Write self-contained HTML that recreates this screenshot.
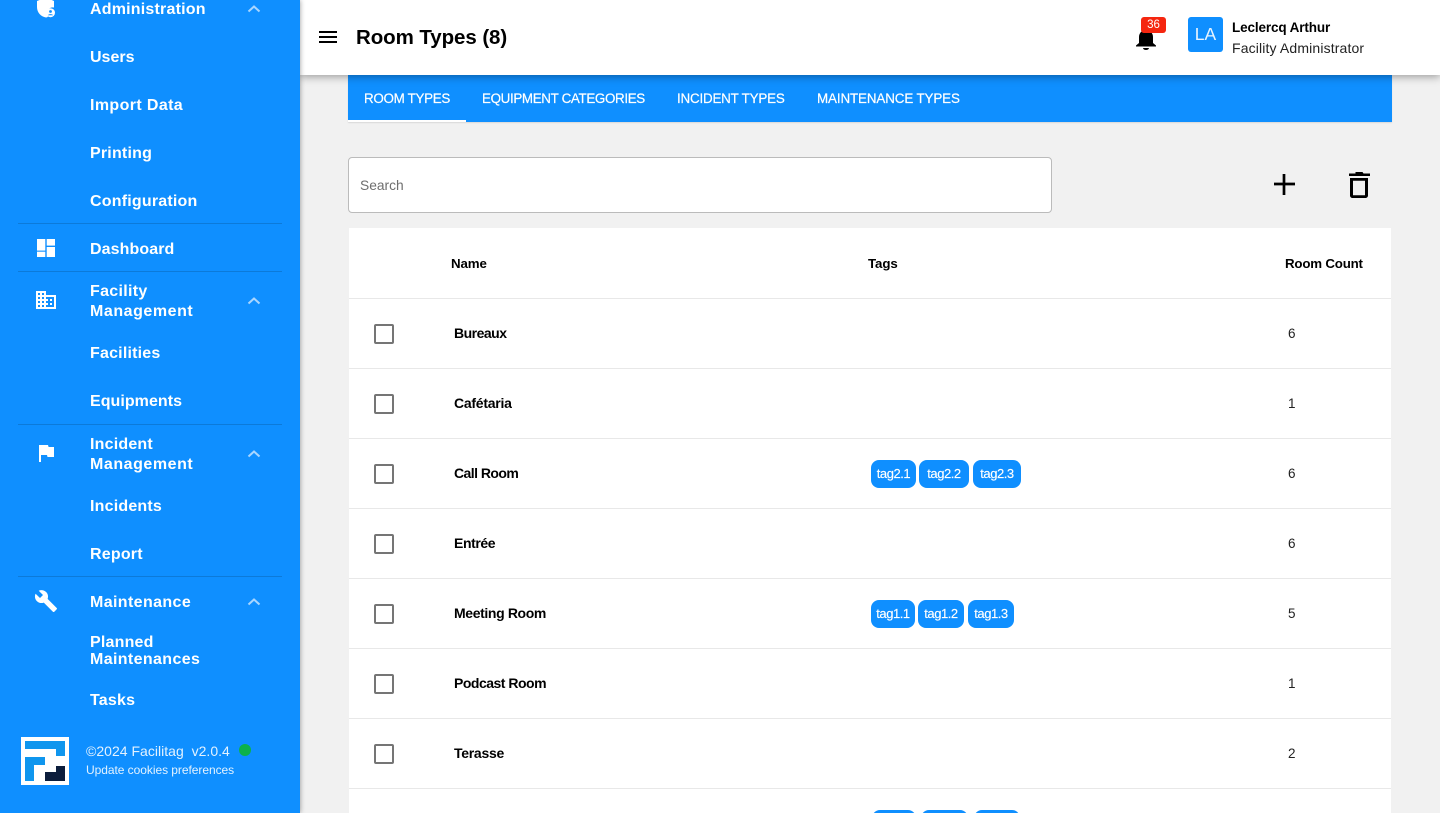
<!DOCTYPE html>
<html lang="en"><head><meta charset="utf-8"><title>Room Types</title>
<style>
*{box-sizing:border-box}
html,body{margin:0;padding:0;width:1440px;height:813px;overflow:hidden;background:#f1f1f1;font-family:"Liberation Sans",sans-serif;color:#000}
#root{position:relative;width:1440px;height:813px;overflow:hidden;background:#f1f1f1}
.a{position:absolute;white-space:nowrap}
#side{position:absolute;left:0;top:0;width:300px;height:813px;background:#0f8fff;box-shadow:0 0 5px rgba(0,0,0,.4);z-index:3}
#side .t{position:absolute;left:90px;margin-top:2px;color:#fff;font-weight:bold;font-size:16px;line-height:20px;white-space:nowrap;letter-spacing:.2px}
.d{position:absolute;left:18px;width:264px;height:1px;background:#0c7ad9}
#head{position:absolute;left:300px;top:0;width:1140px;height:75px;background:#fff;box-shadow:0 2px 8px rgba(0,0,0,.35);z-index:2}
#tabs{position:absolute;left:348px;top:75px;width:1044px;height:47px;background:#0f8fff;box-shadow:0 1px 1px rgba(0,0,0,.1)}
.tab{position:absolute;top:91px;color:#fff;font-size:13.4px;line-height:16px;font-weight:normal;white-space:nowrap;z-index:1;-webkit-text-stroke:.2px #fff}
#tbl{position:absolute;left:349px;top:228px;width:1042px;height:590px;background:#fff}
.ln{position:absolute;left:349px;width:1042px;height:1px;background:#e8e8e8}
.cb{position:absolute;left:374px;width:20px;height:20px;border:2px solid #757575;border-radius:2px;background:#fff}
.nm{position:absolute;left:454px;font-size:14px;line-height:16px;font-weight:bold;white-space:nowrap;letter-spacing:-.4px}
.ct{position:absolute;left:1288px;font-size:13.5px;line-height:16px;color:#222;white-space:nowrap}
.th{position:absolute;top:256px;font-size:13.3px;line-height:16px;font-weight:bold;white-space:nowrap;letter-spacing:-.1px}
.tg{position:absolute;height:28px;background:#0f8fff;color:#fff;border-radius:8px;font-size:13px;line-height:28px;text-align:center;letter-spacing:-.45px;-webkit-text-stroke:.15px #fff}
</style></head><body><div id="root">
<div id="side">
<svg class="a" style="left:36px;top:-4px" width="22" height="24" viewBox="0 0 22 24"><path d="M10 1.500 L1 5 V11 C1 16.500 4.800 20.500 10 21.500 C10.800 21.300 11.500 21 12 20.700 A6 6 0 0 1 18 11.500 V5 Z" fill="#fff"/><circle cx="14.500" cy="16.700" r="4.500" fill="#fff"/><circle cx="14.500" cy="15.500" r="1.400" fill="#0f8fff"/><path d="M12 19.200 C12.500 17.700 16.500 17.700 17 19.200Z" fill="#0f8fff"/></svg>
<span class="t" style="top:-2px;letter-spacing:.2px">Administration</span>
<svg class="a" style="left:247px;top:3.500px" width="14" height="10" viewBox="0 0 14 10"><path d="M1.500 7.500 L7 2.500 L12.500 7.500" fill="none" stroke="#a9d6ff" stroke-width="2"/></svg>
<span class="t" style="top:46px;letter-spacing:0">Users</span>
<span class="t" style="top:94px;letter-spacing:.38px">Import Data</span>
<span class="t" style="top:142px;">Printing</span>
<span class="t" style="top:190px">Configuration</span>
<div class="d" style="top:223px"></div>
<svg class="a" style="left:37px;top:239px" width="18" height="18" viewBox="0 0 18 18" fill="#fff"><rect width="8.300" height="11.600" x="0" y="0"/><rect width="8.300" height="6.600" x="9.700" y="0"/><rect width="8.300" height="10" x="9.700" y="8"/><rect width="8.300" height="5.300" x="0" y="12.700"/></svg>
<span class="t" style="top:238px;letter-spacing:.09px">Dashboard</span>
<div class="d" style="top:271px"></div>
<svg class="a" style="left:36px;top:291px" width="20" height="18" viewBox="0 0 20 18"><path fill="#fff" fill-rule="evenodd" d="M0 0H10V4H20V18H0Z M2 2V4H4V2Z M6 2V4H8V2Z M2 6V8H4V6Z M6 6V8H8V6Z M2 10V12H4V10Z M6 10V12H8V10Z M2 14V16H4V14Z M6 14V16H8V14Z M10 6V8H12V10H10V12H12V14H10V16H18V6Z M14 8H16V10H14Z M14 12H16V14H14Z"/></svg>
<span class="t" style="top:280px;letter-spacing:.3px">Facility</span>
<span class="t" style="top:300px;letter-spacing:.55px">Management</span>
<svg class="a" style="left:247px;top:295.500px" width="14" height="10" viewBox="0 0 14 10"><path d="M1.500 7.500 L7 2.500 L12.500 7.500" fill="none" stroke="#a9d6ff" stroke-width="2"/></svg>
<span class="t" style="top:342px">Facilities</span>
<span class="t" style="top:390px;letter-spacing:.05px">Equipments</span>
<div class="d" style="top:424px"></div>
<svg class="a" style="left:39px;top:445px" width="16" height="18" viewBox="0 0 16 18"><path fill="#fff" d="M0 0H9L9.600 2H15V12H8.500L8 10H2V17H0Z"/></svg>
<span class="t" style="top:433px">Incident</span>
<span class="t" style="top:453px;letter-spacing:.55px">Management</span>
<svg class="a" style="left:247px;top:448.500px" width="14" height="10" viewBox="0 0 14 10"><path d="M1.500 7.500 L7 2.500 L12.500 7.500" fill="none" stroke="#a9d6ff" stroke-width="2"/></svg>
<span class="t" style="top:495px">Incidents</span>
<span class="t" style="top:543px">Report</span>
<div class="d" style="top:576px"></div>
<svg class="a" style="left:34px;top:589px" width="24" height="24" viewBox="0 0 24 24"><path fill="#fff" d="M22.700 19l-9.100-9.100c.9-2.300.4-5-1.500-6.900-2-2-5-2.400-7.400-1.300L9 6 6 9 1.600 4.700C.4 7.100.9 10.100 2.900 12.100c1.900 1.900 4.600 2.400 6.900 1.500l9.100 9.100c.4.400 1 .4 1.400 0l2.300-2.300c.5-.4.500-1.100.1-1.400z"/></svg>
<span class="t" style="top:591px;letter-spacing:.38px">Maintenance</span>
<svg class="a" style="left:247px;top:596.500px" width="14" height="10" viewBox="0 0 14 10"><path d="M1.500 7.500 L7 2.500 L12.500 7.500" fill="none" stroke="#a9d6ff" stroke-width="2"/></svg>
<span class="t" style="top:631px;letter-spacing:.2px">Planned</span>
<span class="t" style="top:648px;letter-spacing:.37px">Maintenances</span>
<span class="t" style="top:689px">Tasks</span>
<svg class="a" style="left:21px;top:737px" width="48" height="48" viewBox="0 0 48 48"><rect width="48" height="48" fill="#fff"/><path fill="#0f96ee" d="M4 4H44V19H35V12H4Z"/><path fill="#0f96ee" d="M4 20H24V28H13V44H4Z"/><path fill="#0c1d3c" d="M24 35H35V29H44V44H24Z"/></svg>
<span class="a" style="left:86px;top:743px;color:#e3f2ff;font-size:14px;line-height:16px;letter-spacing:.02px">©2024 Facilitag&nbsp; v2.0.4</span>
<span class="a" style="left:239px;top:744px;width:12px;height:12px;border-radius:50%;background:#0cb14b"></span>
<span class="a" style="left:86px;top:762px;color:#e3f2ff;font-size:12px;line-height:16px;letter-spacing:-.05px">Update cookies preferences</span>
</div>

<div id="head"></div>
<div class="a" style="left:300px;top:0;width:1140px;height:75px;z-index:4">
<svg class="a" style="left:16px;top:25px" width="24" height="24" viewBox="0 0 24 24"><path d="M3 18h18v-2H3v2zm0-5h18v-2H3v2zm0-7v2h18V6H3z" fill="#000"/></svg>
<span class="a" style="left:56px;top:25px;font-size:20.500px;line-height:26px;font-weight:bold;letter-spacing:-.08px">Room Types (8)</span>
<svg class="a" style="left:834px;top:26px" width="24" height="26" viewBox="0 0 24 26"><path fill="#000" d="M12 24c1.600 0 2.800-.8 3-2H9c.2 1.200 1.400 2 3 2zM7.500 5.500C5.700 7 5 9 5 11v6L2 19.500V20.500H22V19.500L19 17V11c0-2-.7-4-2.500-5.500C15 4.300 9 4.300 7.500 5.500z"/></svg>
<span class="a" style="left:841px;top:17px;width:25px;height:16px;background:#f5260f;border-radius:3px;color:#fff;font-size:11.500px;line-height:16px;text-align:center">36</span>
<span class="a" style="left:888px;top:17px;width:35px;height:35px;background:#0f8fff;border-radius:3px;color:#e8f4ff;font-size:17.500px;line-height:35px;text-align:center">LA</span>
<span class="a" style="left:932px;top:20px;font-size:13.500px;line-height:16px;font-weight:bold;letter-spacing:-.13px">Leclercq Arthur</span>
<span class="a" style="left:932px;top:40px;font-size:14px;line-height:16px;color:#222;letter-spacing:.14px">Facility Administrator</span>
</div>

<div id="tabs"></div>
<div class="a" style="left:348px;top:120px;width:118px;height:2px;background:#fff;z-index:1"></div>
<span class="tab" style="left:364px;letter-spacing:-.3px">ROOM TYPES</span>
<span class="tab" style="left:482px;letter-spacing:-.35px">EQUIPMENT CATEGORIES</span>
<span class="tab" style="left:677px;letter-spacing:-.2px">INCIDENT TYPES</span>
<span class="tab" style="left:817px;letter-spacing:-.12px">MAINTENANCE TYPES</span>

<div class="a" style="left:348px;top:157px;width:704px;height:56px;background:#fff;border:1px solid #bbb;border-radius:4px"></div>
<span class="a" style="left:360px;top:178px;font-size:13.800px;line-height:16px;color:#6e6e6e">Search</span>
<svg class="a" style="left:1272px;top:172px" width="24" height="24" viewBox="0 0 24 24"><path d="M10.650 2h2.700v8.650H23v2.700h-9.650V23h-2.700v-9.650H2v-2.700h8.650z" fill="#000"/></svg>
<svg class="a" style="left:1347px;top:171px" width="24" height="28" viewBox="0 0 24 28"><path fill="#000" fill-rule="evenodd" d="M8.500 1h7l1 1.500H23V5H2V2.500h6.500Z M3 7h18v17.500c0 1.400-1.100 2.500-2.500 2.500H5.500C4.100 27 3 25.900 3 24.500Z M6 9.800V24.200H18V9.800Z"/></svg>

<div id="tbl"></div>
<span class="th" style="left:451px">Name</span>
<span class="th" style="left:868px">Tags</span>
<span class="th" style="left:1285px;letter-spacing:-.2px">Room Count</span>
<div class="ln" style="top:298px"></div>
<div class="ln" style="top:368px"></div>
<div class="ln" style="top:438px"></div>
<div class="ln" style="top:508px"></div>
<div class="ln" style="top:578px"></div>
<div class="ln" style="top:648px"></div>
<div class="ln" style="top:718px"></div>
<div class="ln" style="top:788px"></div>

<div class="cb" style="top:324px"></div><span class="nm" style="top:325px;letter-spacing:-.5px">Bureaux</span><span class="ct" style="top:326px">6</span>
<div class="cb" style="top:394px"></div><span class="nm" style="top:395px;letter-spacing:-.25px">Cafétaria</span><span class="ct" style="top:396px">1</span>
<div class="cb" style="top:464px"></div><span class="nm" style="top:465px;letter-spacing:-.55px">Call Room</span><span class="ct" style="top:466px">6</span>
<div class="cb" style="top:534px"></div><span class="nm" style="top:535px;letter-spacing:-.4px">Entrée</span><span class="ct" style="top:536px">6</span>
<div class="cb" style="top:604px"></div><span class="nm" style="top:605px;letter-spacing:-.37px">Meeting Room</span><span class="ct" style="top:606px">5</span>
<div class="cb" style="top:674px"></div><span class="nm" style="top:675px;letter-spacing:-.5px">Podcast Room</span><span class="ct" style="top:676px">1</span>
<div class="cb" style="top:744px"></div><span class="nm" style="top:745px;letter-spacing:-.27px">Terasse</span><span class="ct" style="top:746px">2</span>

<span class="tg" style="left:871px;top:460px;width:45px">tag2.1</span>
<span class="tg" style="left:919px;top:460px;width:50px">tag2.2</span>
<span class="tg" style="left:973px;top:460px;width:48px">tag2.3</span>
<span class="tg" style="left:871px;top:600px;width:44px">tag1.1</span>
<span class="tg" style="left:918px;top:600px;width:46px">tag1.2</span>
<span class="tg" style="left:968px;top:600px;width:46px">tag1.3</span>
<div class="tg" style="left:872px;top:810px;width:44px"></div>
<div class="tg" style="left:921px;top:810px;width:47px"></div>
<div class="tg" style="left:974px;top:810px;width:46px"></div>
</div></body></html>
